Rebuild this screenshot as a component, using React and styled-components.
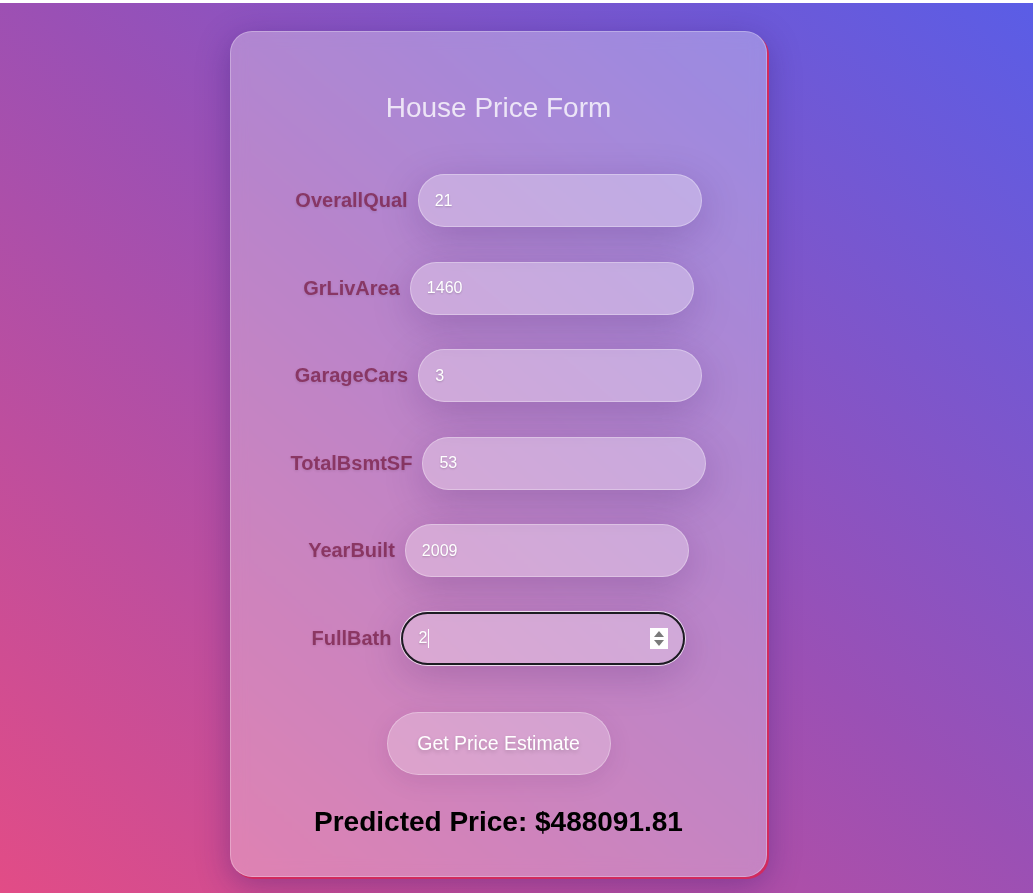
import React from 'react';
import styled, { createGlobalStyle, css } from 'styled-components';

const GlobalStyle = createGlobalStyle`
  html, body {
    margin: 0;
    padding: 0;
    background: #ffffff;
  }

  body {
    font-family: "Liberation Sans", Arial, sans-serif;
  }
`;

const Page = styled.div`
  box-sizing: border-box;
  display: flex;
  align-items: flex-start;
  margin-top: 3px;
  padding: 28px 0 0 230px;
  width: 100%;
  height: 890px;
  overflow: hidden;
  background: linear-gradient(to top right, #e24c86 0%, #9a50b5 52%, #5a5de6 100%);
`;

const Card = styled.div`
  box-sizing: border-box;
  display: flex;
  flex-direction: column;
  align-items: center;
  width: 537px;
  height: 846px;
  padding-top: 60px;

  border: 1px solid rgba(255, 255, 255, 0.28);
  border-radius: 22px;
  background: rgba(255, 255, 255, 0.3);
  box-shadow: 2px 2px 0 #d22a5e, 0 8px 32px rgba(40, 20, 110, 0.35);
  backdrop-filter: blur(8px);
`;

const Title = styled.h2`
  margin: 0 0 50px 0;
  font-size: 28px;
  line-height: 32px;
  font-weight: normal;
  color: rgba(255, 255, 255, 0.78);
`;

const Form = styled.form`
  display: flex;
  flex-direction: column;
  align-items: center;
  gap: 34.6px;
  margin: 0;
`;

const Row = styled.div`
  position: relative;
  display: flex;
  align-items: center;
  gap: 10px;
  height: 53px;
`;

const Label = styled.label`
  font-size: 20px;
  font-weight: bold;
  color: rgba(128, 40, 82, 0.82);
  text-shadow: 0 1px 3px rgba(0, 0, 0, 0.12);
`;

const Field = styled.div`
  position: relative;
`;

const Input = styled.input`
  box-sizing: border-box;
  width: 284px;
  height: 53px;
  padding: 0 16px;

  border: 1px solid rgba(255, 255, 255, 0.3);
  border-radius: 27px;
  background: rgba(255, 255, 255, 0.3);
  box-shadow: 0 10px 40px rgba(50, 15, 90, 0.22);
  outline: none;

  font-family: "Liberation Sans", Arial, sans-serif;
  font-size: 16px;
  color: #ffffff;
  text-shadow: 0 1px 2px rgba(0, 0, 0, 0.2);

  ${({ $focused }) =>
    $focused &&
    css`
      border: 2px solid #1c1c22;
      padding-left: 15px;
      box-shadow: 0 0 0 1px rgba(255, 255, 255, 0.75), 0 10px 40px rgba(50, 15, 90, 0.22);
      caret-color: #ffffff;
    `}
`;

const Caret = styled.span`
  position: absolute;
  top: 17px;
  left: 27px;
  width: 1px;
  height: 19px;
  background: #ffffff;
`;

const Spinner = styled.span`
  position: absolute;
  top: 16px;
  right: 17px;
  display: flex;
  flex-direction: column;
  align-items: center;
  justify-content: center;
  gap: 3px;
  width: 18px;
  height: 21px;
  background: #ffffff;
`;

const Arrow = styled.span`
  width: 0;
  height: 0;
  border-left: 5px solid transparent;
  border-right: 5px solid transparent;
  ${({ $down }) =>
    $down
      ? css`border-top: 6px solid #7a7a7a;`
      : css`border-bottom: 6px solid #7a7a7a;`}
`;

const Button = styled.button`
  margin-top: 47px;
  width: 224px;
  height: 63px;

  border: 1px solid rgba(255, 255, 255, 0.3);
  border-radius: 32px;
  background: rgba(255, 255, 255, 0.25);
  box-shadow: 0 6px 24px rgba(60, 20, 90, 0.1);

  font-family: "Liberation Sans", Arial, sans-serif;
  font-size: 19.5px;
  color: #ffffff;
  text-shadow: 0 2px 4px rgba(0, 0, 0, 0.2);
  cursor: pointer;
`;

const Result = styled.h2`
  margin: 31px 0 0 0;
  font-size: 28px;
  line-height: 32px;
  font-weight: bold;
  color: #000000;
`;

const fields = [
  { name: 'OverallQual', value: '21' },
  { name: 'GrLivArea', value: '1460' },
  { name: 'GarageCars', value: '3' },
  { name: 'TotalBsmtSF', value: '53' },
  { name: 'YearBuilt', value: '2009' },
  { name: 'FullBath', value: '2', focused: true },
];

const App = () => {
  return (
    <>
      <GlobalStyle />
      <Page>
        <Card>
          <Title>House Price Form</Title>
          <Form onSubmit={(e) => e.preventDefault()}>
            {fields.map((f) => (
              <Row key={f.name}>
                <Label htmlFor={f.name}>{f.name}</Label>
                <Field>
                  <Input id={f.name} type="text" defaultValue={f.value} $focused={f.focused} />
                  {f.focused && (
                    <>
                      <Caret />
                      <Spinner>
                        <Arrow />
                        <Arrow $down />
                      </Spinner>
                    </>
                  )}
                </Field>
              </Row>
            ))}
          </Form>
          <Button type="button">Get Price Estimate</Button>
          <Result>Predicted Price: $488091.81</Result>
        </Card>
      </Page>
    </>
  );
};

export default App;
